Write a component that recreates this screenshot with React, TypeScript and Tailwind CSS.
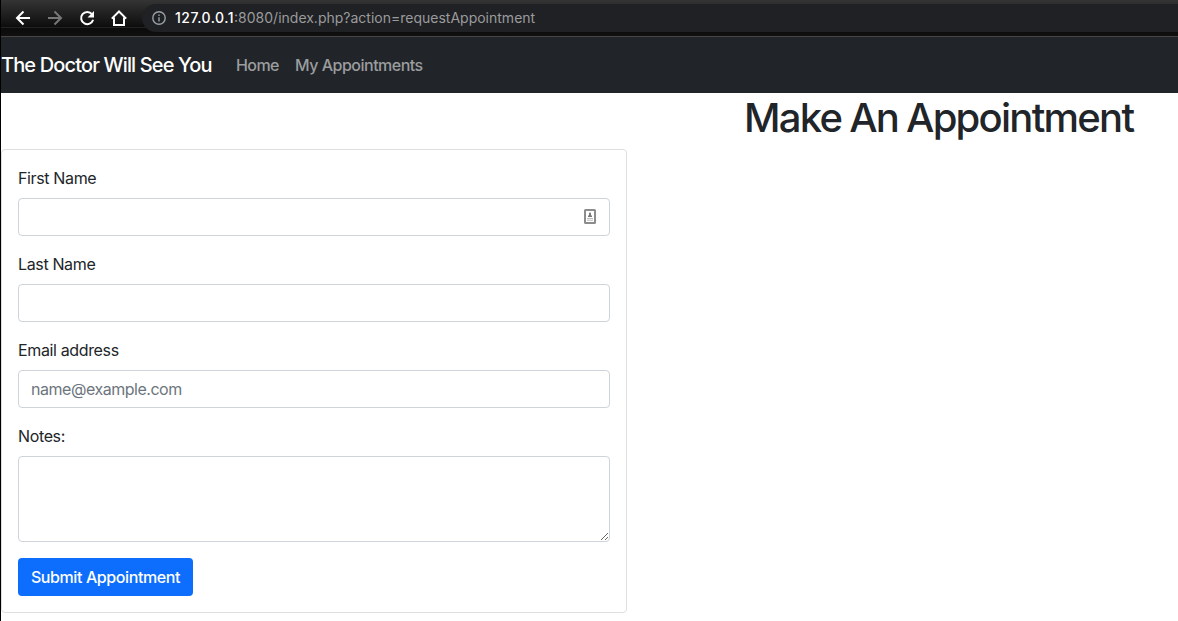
import React from 'react';

function BrowserBar() {
  return (
    <header className="flex h-[37px] items-start border-b border-[#454545] bg-[linear-gradient(#343434_0px,#0d0d0d_27px,#222_27px,#222_28px,#0b0b0b_28px,#101010_36px)] text-white">
      <nav className="flex h-9 w-[141px] shrink-0 items-center gap-4 pl-[14px]">
        <svg className="size-4 shrink-0" viewBox="0 0 16 16" fill="none" stroke="#fff" strokeWidth="2">
          <path d="M15 8H2.5M8.5 1.5L2 8l6.5 6.5" />
        </svg>
        <svg className="size-4 shrink-0" viewBox="0 0 16 16" fill="none" stroke="#777" strokeWidth="2">
          <path d="M1 8h12.500M7.500 1.500L14 8l-6.500 6.500" />
        </svg>
        <svg className="size-4 shrink-0" viewBox="0 0 16 16">
          <path d="M13 4.200A6.100 6.100 0 1 0 14.100 9.700" fill="none" stroke="#fff" strokeWidth="2" />
          <path d="M15 1v6.500H8.500z" fill="#fff" />
        </svg>
        <svg className="size-4 shrink-0" viewBox="0 0 16 16" fill="none" stroke="#fff" strokeWidth="2">
          <path d="M.8 8.600L8 1.500l7.200 7.100M3 7.500V15h10V7.500" />
        </svg>
      </nav>
      <div className="mt-1 flex h-7 grow items-center rounded-l-full bg-[#202124] pl-[10px]">
        <svg className="size-[14px] shrink-0" viewBox="0 0 14 14" fill="none" stroke="#9aa0a6" strokeWidth="1.400">
          <circle cx="7" cy="7" r="6.200" />
          <path d="M7 6.200v4.300M7 3.500v1.500" />
        </svg>
        <p className="ml-[9px] whitespace-nowrap text-[14px] font-normal leading-5 text-[#9a9b9d]">
          <span className="font-medium tracking-[.5px] text-white">127.0.0.1</span>
          <span>:8080/index.php?action=requestAppointment</span>
        </p>
      </div>
    </header>
  );
}

function NavBar() {
  return (
    <nav className="flex h-14 items-center whitespace-nowrap bg-[#212529] [font-weight:450]">
      <a className="w-[235px] shrink-0 text-[20px] leading-[30px] tracking-[-.86px] text-white"><span>The Doctor Will See You</span></a>
      <a className="w-[59px] shrink-0 tracking-[-.6px] text-[#9b9d9f]"><span>Home</span></a>
      <a className="tracking-[-.5px] text-[#9b9d9f]"><span>My Appointments</span></a>
    </nav>
  );
}

function ContactIcon() {
  return (
    <svg className="-mt-px h-[15px] w-3" viewBox="0 0 12 15">
      <rect x="1" y="1" width="10" height="13" rx=".5" fill="#fff" stroke="#8c8c8c" strokeWidth="2" />
      <path d="M6 3l1 1.500V6l1 1v1H4V7l1-1V4.500z" fill="#777" />
      <path d="M3 9.500h6M3 11.200h6" stroke="#bbb" />
    </svg>
  );
}

function Field({ label, placeholder, icon }: { label: string; placeholder?: string; icon?: boolean }) {
  return (
    <label className="mb-4 block">
      <span className="mb-2 block leading-6 tracking-[-.36px]">{label}</span>
      <span className="flex h-[38px] items-center rounded-[4px] border border-[#ced4da] pr-[13px]">
        <input className="h-full min-w-0 grow bg-transparent px-3 tracking-[-.47px] outline-none placeholder:text-[#6c757d]" placeholder={placeholder} />
        {icon && <ContactIcon />}
      </span>
    </label>
  );
}

export default function App() {
  return (
    <div className="h-[621px] overflow-hidden border-l border-black bg-white font-['Inter',sans-serif] text-[16px] font-normal leading-6 text-[#212529]">
      <BrowserBar />
      <NavBar />
      <h1 className="mb-2 h-12 whitespace-nowrap pl-[743px] pt-[1px] text-[40px] font-medium leading-12 tracking-[-1.74px] [word-spacing:-1px]"><span>Make An Appointment</span></h1>
      <form className="h-[464px] w-[626px] rounded-[4px] border border-[#dfdfdf] p-4">
        <Field label="First Name" icon />
        <Field label="Last Name" />
        <Field label="Email address" placeholder="name@example.com" />
        <label className="mb-4 block">
          <span className="mb-2 block tracking-[-.36px]">Notes:</span>
          <textarea className="block h-[86px] w-full resize rounded-[4px] border border-[#ced4da] px-3 py-1.5 outline-none" />
        </label>
        <button type="button" className="h-[38px] w-[175px] whitespace-nowrap rounded-[4px] bg-[#0d6efd] tracking-[-.4px] text-white [font-weight:450]"><span>Submit Appointment</span></button>
      </form>
    </div>
  );
}
